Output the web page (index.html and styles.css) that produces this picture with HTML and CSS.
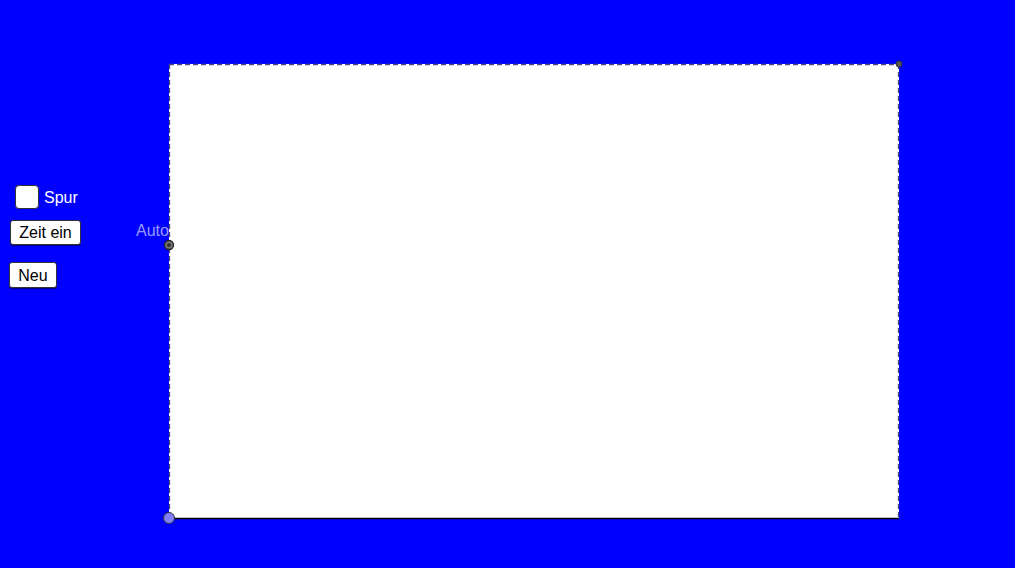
FILE: index.html
```html
<!DOCTYPE html>
<html>
<head>
<meta charset="utf-8">
<link rel="stylesheet" href="styles.css">
</head>
<body>
<div class="applet">
  <svg class="canvas" width="1015" height="568" viewBox="0 0 1015 568">
    <text x="136" y="236" class="label">Auto</text>
    <rect x="169" y="64" width="730" height="454" fill="#ffffff"/>
    <line x1="169" y1="64.5" x2="899" y2="64.5" class="dash"/>
    <line x1="169.5" y1="64" x2="169.5" y2="518" class="dash"/>
    <line x1="898.5" y1="64" x2="898.5" y2="518" class="dash"/>
    <line x1="169" y1="518.5" x2="899" y2="518.5" stroke="#000" stroke-width="1.5"/>
    <circle cx="899" cy="64" r="3" fill="#555" stroke="#333" stroke-width="1"/>
    <circle cx="169" cy="245" r="4.5" fill="#777" stroke="#222" stroke-width="1.3"/>
    <circle cx="169" cy="245" r="2" fill="#333"/>
    <circle cx="169" cy="518" r="5.5" fill="#7f7fff" stroke="#333" stroke-width="1"/>
  </svg>
  <div class="controls">
    <label class="check"><span class="box"></span><span class="txt">Spur</span></label>
    <button class="btn zeit">Zeit ein</button>
    <button class="btn neu">Neu</button>
  </div>
</div>
</body>
</html>
```
FILE: styles.css
```css
html, body {
  margin: 0;
  padding: 0;
  background: #0000ff;
  width: 1015px;
  height: 568px;
  overflow: hidden;
  font-family: "Liberation Sans", Arial, sans-serif;
}
.applet {
  position: relative;
  width: 1015px;
  height: 568px;
}
.canvas {
  position: absolute;
  left: 0;
  top: 0;
}
.label {
  font-family: "Liberation Sans", Arial, sans-serif;
  font-size: 16px;
  fill: #9999ff;
}
.dash {
  stroke: #4a4a7a;
  stroke-width: 1.3;
  stroke-dasharray: 5 3;
}
.controls {
  position: relative;
  display: flex;
  flex-direction: column;
  align-items: flex-start;
  padding-top: 185px;
}
.check {
  display: flex;
  align-items: center;
  margin-left: 15px;
  gap: 5px;
}
.box {
  width: 22px;
  height: 22px;
  background: #fff;
  border: 1px solid #333;
  border-radius: 4px;
}
.txt {
  color: #fff;
  font-size: 16px;
  padding-top: 1px;
}
.btn {
  font-family: "Liberation Sans", Arial, sans-serif;
  font-size: 16px;
  color: #000;
  background: #fff;
  border: 1px solid #333;
  border-radius: 3px;
  box-shadow: 0 1px 1px rgba(0,0,0,0.5);
  padding: 0 9px;
  height: 25px;
  line-height: 23px;
}
.zeit {
  margin-left: 10px;
  margin-top: 11px;
  width: 71px;
  padding: 0;
}
.neu {
  margin-left: 9px;
  margin-top: 17px;
  height: 26px;
  width: 48px;
  padding: 0;
}
```
